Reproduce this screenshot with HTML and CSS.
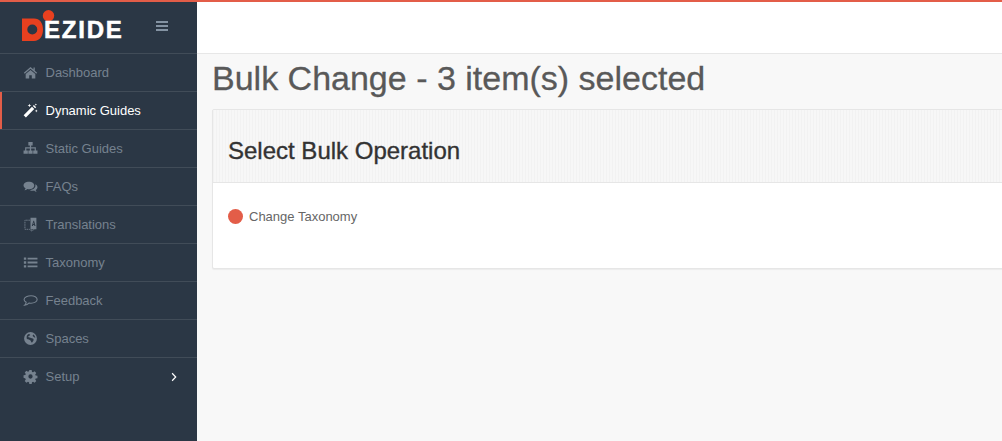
FILE: index.html
```html
<!DOCTYPE html>
<html lang="en">
<head>
<meta charset="utf-8">
<title>Bulk Change</title>
<link rel="stylesheet" href="styles.css">
</head>
<body>
<div class="app">
  <aside class="sidebar">
    <div class="brand">
      <svg class="logo-mark" viewBox="0 0 33 32" width="33" height="32" aria-hidden="true">
        <path fill="#e8401f" fill-rule="evenodd" d="M0 8.500H12C17.800 8.500 21 13 21 19.500S17.800 31 12 31H0zM10.300 14.500a5 5 0 1 0 0 10a5 5 0 0 0 0-10z"/>
        <circle cx="26.500" cy="5.800" r="5.700" fill="#e8401f"/>
      </svg>
      <span class="logo-text">EZIDE</span>
      <svg class="burger" viewBox="0 0 12 10" width="12" height="10" aria-hidden="true"><path fill="#8493a3" d="M0 0h12v2H0zM0 4h12v2H0zM0 8h12v2H0z"/></svg>
    </div>
    <nav class="menu">
      <a class="item"><svg class="ico" viewBox="0 0 14 14"><path d="M7 1.800 .8 7.200l.8.9L7 3.500l5.400 4.600.8-.9-2.200-1.900V2.400H9.800v1.800zM2.500 8.400V12.500h3.300V9.500h2.400v3h3.300V8.400L7 4.600z"/></svg>Dashboard</a>
      <a class="item active"><svg class="ico" viewBox="0 0 14 14"><path d="M.6 11.400 8.400 3.600l2.100 2.100L2.700 13.500zM9.200 2.800l1-1 2.100 2.100-1 1zM6 .6l.5 1.200 1.200.5-1.200.5-.5 1.200-.5-1.200-1.200-.5 1.200-.5zM12.400 6l.4 1 1 .4-1 .4-.4 1-.4-1-1-.4 1-.4zM12 .4l.3.8.8.3-.8.3-.3.8-.3-.8-.8-.3.8-.3z"/></svg>Dynamic Guides</a>
      <a class="item"><svg class="ico" viewBox="0 0 14 14"><path d="M5 1h4v3.200H7.600v1.700H12v2.900h1.500V12h-4V8.800h1.400V7.100H7.600v1.700H9V12H5V8.800h1.400V7.100H3.100v1.700h1.400V12h-4V8.800H2V5.900h4.400V4.200H5z"/></svg>Static Guides</a>
      <a class="item"><svg class="ico" viewBox="0 0 14 14"><path d="M5.500 2.500C8.300 2.500 10.500 4 10.500 6S8.300 9.500 5.500 9.500c-.5 0-1 0-1.400-.2C3.300 10 2.300 10.400 1.300 10.500 1.900 9.900 2.300 9.300 2.400 8.600 1.200 8 .5 7.100.5 6c0-2 2.200-3.500 5-3.500zM11.400 5c1.300.5 2.100 1.500 2.100 2.700 0 1-.6 1.900-1.700 2.500.1.700.5 1.300 1.100 1.800-1-.1-1.900-.5-2.600-1.200-.4.100-.9.200-1.300.2-1 0-2-.3-2.700-.8 2.900-.1 5.300-1.900 5.300-4.200 0-.3-.1-.7-.2-1z"/></svg>FAQs</a>
      <a class="item"><svg class="ico" viewBox="0 0 14 14"><path fill-rule="evenodd" d="M7 .8H12.500V11.500H7zM9.700 3.500 8.200 8.500h1l.3-1h.9l.3 1h1L10.300 3.500zM9.950 4.900l.3 1.700h-.7z"/><path fill="none" stroke="currentColor" stroke-width=".8" stroke-dasharray="1.500 .6" d="M6.500 3H1.800V11.500H6.500M7.500 11.500v1.800l3-1.800"/></svg>Translations</a>
      <a class="item"><svg class="ico" viewBox="0 0 14 14"><path d="M.8 2.300h2.200v2.200H.8zM4.300 2.500H13.500v1.800H4.300zM.8 5.900h2.200v2.200H.8zM4.300 6.100H13.500v1.800H4.300zM.8 9.500h2.200v2.200H.8zM4.300 9.700H13.500v1.800H4.300z"/></svg>Taxonomy</a>
      <a class="item"><svg class="ico" viewBox="0 0 14 14"><path fill="none" stroke="currentColor" stroke-width="1" d="M7.500 2.500c3 0 5.700 1.500 5.700 3.500S10.500 9.500 7.500 9.500c-.6 0-1.200-.1-1.700-.2-.9.900-2.300 1.900-4.300 2.200 .6-.6 1.400-1.500 1.500-2.800C1.800 8 1 7 1 6c0-2 3.500-3.500 6.500-3.500z"/></svg>Feedback</a>
      <a class="item"><svg class="ico" viewBox="0 0 14 14"><path fill-rule="evenodd" d="M7 1a6 6 0 1 0 0 12A6 6 0 0 0 7 1zM5 2.800C5.800 3 6.500 3 6.800 3.700 6.300 4.500 5 4.400 4.800 5.500c.8.600 2 .2 2.700 1 1 .3 2.300.3 2.400 1.500.1 1.200-1 2-1.500 2.900-.8-.3-.9-1.500-1.400-2.100C6.200 8.300 5 7.800 3.600 7.500 3.200 5.300 3.400 3.800 5 2.800zM9.500 3.300C10.500 4 11.300 5 11.500 6.300 10.600 6 9.500 5.500 9 4.500z"/></svg>Spaces</a>
      <a class="item"><svg class="ico" viewBox="0 0 14 14"><path fill-rule="evenodd" d="M5.900 1h2.200l.3 1.700 1 .4 1.400-1 1.600 1.600-1 1.400.4 1 1.700.3v2.200l-1.700.3-.4 1 1 1.400-1.600 1.600-1.400-1-1 .4-.3 1.700H5.900l-.3-1.700-1-.4-1.400 1-1.600-1.600 1-1.400-.4-1L.5 8.100V5.900l1.700-.3.4-1-1-1.400 1.600-1.600 1.400 1 1-.4zM7 5a2 2 0 1 0 0 4 2 2 0 0 0 0-4z"/></svg>Setup<svg class="chev" viewBox="0 0 8 12" width="6" height="10"><path fill="none" stroke="#fff" stroke-width="1.600" d="M1.500 1 6.300 6 1.500 11"/></svg></a>
    </nav>
  </aside>
  <div class="main">
    <header class="topbar"></header>
    <div class="content">
      <h1 class="title">Bulk Change - 3 item(s) selected</h1>
      <section class="card">
        <div class="card-head"><h2 class="card-title">Select Bulk Operation</h2></div>
        <div class="card-body">
          <label class="option"><span class="radio"></span>Change Taxonomy</label>
        </div>
      </section>
    </div>
  </div>
</div>
</body>
</html>
```
FILE: styles.css
```css
* { box-sizing: border-box; }
html, body { margin: 0; height: 100%; overflow: hidden; }
body { font-family: "Liberation Sans", Arial, sans-serif; background: #f8f8f8; color: #5a5a5a; }
.app { display: flex; height: 441px; border-top: 2px solid #e35d48; }
.sidebar { width: 197px; flex: none; background: #2b3745; }
.brand { height: 51px; display: flex; align-items: flex-start; padding-left: 22px; }
.logo-mark { margin-top: 8px; flex: none; }
.logo-text { font-size: 24px; font-weight: 700; color: #fff; margin-top: 15px; margin-left: -11px; line-height: 26px; letter-spacing: 1.800px; -webkit-text-stroke: .5px #fff; }
.burger { margin-left: 32px; margin-top: 19px; flex: none; }
.menu { display: flex; flex-direction: column; }
.item { height: 38px; border-top: 1px solid #414c58; display: flex; align-items: center; padding-left: 23px; font-size: 13px; color: #76828f; position: relative; }
.ico { width: 15px; height: 15px; margin-right: 7.500px; fill: currentColor; flex: none; }
.item.active { color: #fff; box-shadow: inset 2px 0 0 #e35d48; }
.chev { position: absolute; right: 20px; top: 14px; }
.main { flex: 1; min-width: 0; display: flex; flex-direction: column; overflow: hidden; }
.topbar { height: 52px; background: #fff; border-bottom: 1px solid #e7e7e7; flex: none; }
.content { padding: 0 0 0 15px; }
.title { margin: 7px 0 13px; font-size: 34px; font-weight: 400; line-height: 35px; color: #595959; white-space: nowrap; -webkit-text-stroke: .3px #595959; }
.card { width: 820px; background: #fff; border: 1px solid #e6e6e6; border-radius: 2px; box-shadow: 0 1px 1px rgba(0,0,0,.05); height: 160px; }
.card-head { height: 73px; background: repeating-linear-gradient(90deg, #f2f2f2 0 1px, #f7f7f7 1px 3px); border-bottom: 1px solid #e6e6e6; padding: 10px 0 0 15px; display: flex; align-items: center; }
.card-title { margin: 0; font-size: 24px; line-height: 26px; font-weight: 400; color: #333; -webkit-text-stroke: .35px #333; }
.card-body { padding: 26px 15px; }
.option { display: flex; align-items: center; font-size: 13px; color: #666; }
.radio { width: 15px; height: 15px; border-radius: 50%; background: #e35d48; margin-right: 6px; flex: none; }
```
